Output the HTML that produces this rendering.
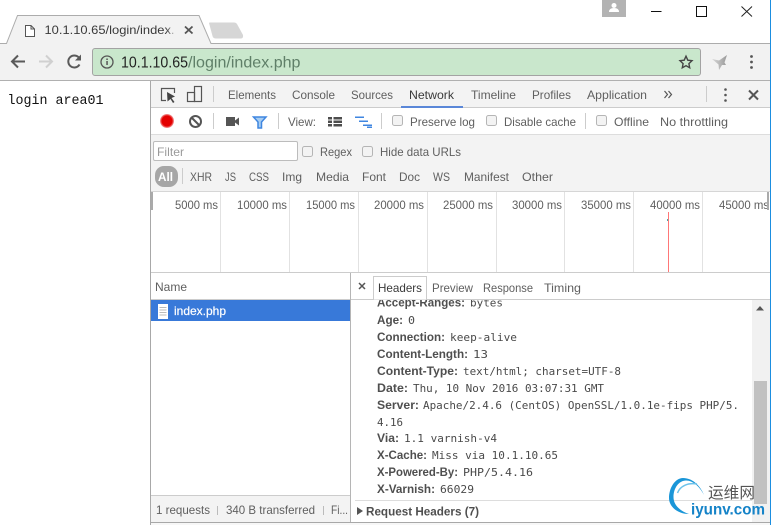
<!DOCTYPE html>
<html><head><meta charset="utf-8"><title>login</title>
<style>
html,body{margin:0;padding:0;background:#fff;width:771px;height:525px;overflow:hidden}
svg{display:block}
text{font-family:"Liberation Sans",sans-serif;font-size:12px;fill:#5f5f5f;white-space:pre}
.d{fill:#3a3a3a}
.b{font-weight:bold;fill:#4f4f4f}
.m{font-family:"DejaVu Sans Mono","Liberation Mono",monospace;font-size:11px;fill:#4a4a4a}
</style></head><body>
<svg width="771" height="525" viewBox="0 0 771 525" xmlns="http://www.w3.org/2000/svg">
<defs><clipPath id="hc"><rect x="352" y="300" width="400" height="195"/></clipPath>
<clipPath id="oc"><rect x="152" y="192" width="616" height="80"/></clipPath>
<linearGradient id="fade" x1="0" x2="1"><stop offset="0" stop-color="#f2f2f2" stop-opacity="0"/><stop offset="1" stop-color="#f2f2f2"/></linearGradient>
<linearGradient id="bird" x1="0" x2="1"><stop offset="0" stop-color="#d8d8d8"/><stop offset="1" stop-color="#9a9a9a"/></linearGradient>
<radialGradient id="rec"><stop offset="0.72" stop-color="#e40000"/><stop offset="1" stop-color="#f4a0a0"/></radialGradient></defs>

<!-- browser chrome -->
<rect width="771" height="525" fill="#fff"/>
<rect x="0" y="43" width="770" height="38" fill="#f2f2f2"/>
<path d="M6 43.500L17.500 15.500H199L211 43.500Z" fill="#f2f2f2"/>
<path d="M0 43.500H6.500L17.500 15.500H199L211 43.500H770" fill="none" stroke="#acacac"/>
<path d="M209 23Q209 22.500 210 22.500H234Q236 22.500 237 24L243 35Q243.500 38.500 241 38.500H216Q213 38.500 212.500 36Z" fill="#d6d6d6"/>
<path d="M25.500 25.500H31L34.500 29V36.500H25.500ZM31 25.500V29H34.500" fill="#fff" stroke="#555"/>
<text x="44.500" y="34" class="d" lengthAdjust="spacingAndGlyphs" textLength="130">10.1.10.65/login/index.</text>
<rect x="166" y="20" width="11" height="18" fill="url(#fade)"/>
<path d="M185 26.500L192.500 33.500M192.500 26.500L185 33.500" stroke="#555" stroke-width="1.800"/>
<rect x="602" y="0" width="24" height="17" fill="#b3b3b3"/>
<path d="M609 12Q609 8 614 8Q619 8 619 12Z" fill="#fff"/><circle cx="614" cy="5.500" r="2.500" fill="#fff"/>
<path d="M651 11.500H661.500" stroke="#111"/>
<rect x="696.500" y="6.500" width="10" height="10" fill="none" stroke="#111"/>
<path d="M741.500 6.500L752 16.500M752 6.500L741.500 16.500" stroke="#222"/>
<rect x="770" y="0" width="1" height="525" fill="#1b8ee0"/>

<path d="M25 61.500H12M18 55.500L12 61.500L18 67.500" fill="none" stroke="#5a5a5a" stroke-width="2"/>
<path d="M39 61.500H52M46 55.500L52 61.500L46 67.500" fill="none" stroke="#d0d0d0" stroke-width="2"/>
<path d="M79.500 64.500A6 6 0 1 1 79.500 58.500" fill="none" stroke="#5a5a5a" stroke-width="2"/><path d="M81 54.500V60.500H75Z" fill="#5a5a5a"/>
<rect x="92.500" y="48.500" width="608" height="27" rx="2.500" fill="#c9e7cc" stroke="#a3a3a3"/>
<circle cx="107" cy="62" r="6" fill="none" stroke="#555" stroke-width="1.300"/>
<rect x="106.300" y="61" width="1.500" height="4" fill="#555"/><rect x="106.300" y="58.500" width="1.500" height="1.500" fill="#555"/>
<text x="121" y="67.500" style="font-size:16px;fill:#222" lengthAdjust="spacingAndGlyphs" textLength="67">10.1.10.65</text>
<text x="188" y="67.500" style="font-size:16px;fill:#5f7f68" lengthAdjust="spacingAndGlyphs" textLength="112.500">/login/index.php</text>
<path d="M686 56.200L687.800 60.200L692 60.700L688.900 63.600L689.700 67.800L686 65.700L682.300 67.800L683.100 63.600L680 60.700L684.200 60.200Z" fill="none" stroke="#444" stroke-width="1.400"/>
<path d="M712 59L719 60.500L727 55L724.500 62.500L726 65L722 65L719 70L718.500 64.500Z" fill="url(#bird)"/>
<circle cx="751.500" cy="56.500" r="1.400" fill="#555"/><circle cx="751.500" cy="62" r="1.400" fill="#555"/><circle cx="751.500" cy="67.500" r="1.400" fill="#555"/>
<path d="M0 80.500H770" stroke="#b0b0b0"/>

<!-- page -->
<text x="7.500" y="104" style="font-family:'Liberation Mono',monospace;font-size:13.500px;fill:#111" lengthAdjust="spacingAndGlyphs" textLength="96">login area01</text>

<!-- devtools -->
<rect x="151" y="81" width="619" height="444" fill="#fff"/>
<path d="M150.500 81V525" stroke="#a8a8a8"/>
<rect x="151" y="81" width="619" height="26" fill="#f3f3f3"/>
<path d="M151 107.500H770" stroke="#ccc"/>
<rect x="401" y="106" width="62" height="2" fill="#5a87d8"/>
<path d="M166 100.500H161.500V88.500H174.500V93" fill="none" stroke="#555" stroke-width="1.200"/>
<path d="M167 92L175 96.500L171.500 98L174.500 102L173 103L170.500 99L167.500 101.500Z" fill="#444"/>
<rect x="194.500" y="86.500" width="7" height="15" fill="none" stroke="#555" stroke-width="1.200"/>
<rect x="187.500" y="92.500" width="7" height="9" fill="none" stroke="#555" stroke-width="1.200"/>
<path d="M213.500 86V102M706.500 86V102" stroke="#ccc"/>
<text x="228" y="99" lengthAdjust="spacingAndGlyphs" textLength="48">Elements</text>
<text x="292" y="99" lengthAdjust="spacingAndGlyphs" textLength="43">Console</text>
<text x="351" y="99" lengthAdjust="spacingAndGlyphs" textLength="42">Sources</text>
<text x="409" y="99" class="d" lengthAdjust="spacingAndGlyphs" textLength="45">Network</text>
<text x="471" y="99" lengthAdjust="spacingAndGlyphs" textLength="45">Timeline</text>
<text x="532" y="99" lengthAdjust="spacingAndGlyphs" textLength="39">Profiles</text>
<text x="587" y="99" lengthAdjust="spacingAndGlyphs" textLength="60">Application</text>
<path d="M664.500 91L667.500 94.500L664.500 98M668.500 91L671.500 94.500L668.500 98" fill="none" stroke="#555" stroke-width="1.200"/>
<circle cx="725.500" cy="89.500" r="1.300" fill="#555"/><circle cx="725.500" cy="95" r="1.300" fill="#555"/><circle cx="725.500" cy="100.500" r="1.300" fill="#555"/>
<path d="M749 90.500L758 99.500M758 90.500L749 99.500" stroke="#555" stroke-width="2"/>

<!-- toolbar 2 -->
<path d="M151 134.500H770" stroke="#ddd"/>
<circle cx="167" cy="121" r="7" fill="url(#rec)"/>
<circle cx="195.500" cy="121.500" r="5.500" fill="none" stroke="#555" stroke-width="2"/>
<path d="M191.500 117.500L199.500 125.500" stroke="#555" stroke-width="2"/>
<path d="M213.500 113V129M278.500 113V129M381.500 113V129M585.500 113V129" stroke="#ccc"/>
<rect x="226" y="117" width="9" height="9" fill="#555"/><path d="M235 120.500L239 117.500V125.500L235 122.500Z" fill="#555"/>
<path d="M253.500 117H266L261.500 122V128H258V122Z" fill="#a7cdf2" stroke="#3f86e0" stroke-width="1.500"/>
<text x="288" y="126" lengthAdjust="spacingAndGlyphs" textLength="28">View:</text>
<path d="M328 117h4v2.500h-4zM328 120.500h4v2.500h-4zM328 124h4v2.500h-4zM333.500 117h8.500v2.500h-8.500zM333.500 120.500h8.500v2.500h-8.500zM333.500 124h8.500v2.500h-8.500z" fill="#4d4d4d"/>
<path d="M355 116.500h9v1.500h-9zM359 120.500h9v1.500h-9zM363 124.500h9v1.500h-9zM367 126.500h5v1.500h-5z" fill="#3f86e0"/>
<g fill="#f3f3f3" stroke="#b5b5b5"><rect x="392.500" y="115.500" width="10" height="10" rx="2"/><rect x="486.500" y="115.500" width="10" height="10" rx="2"/><rect x="596.500" y="115.500" width="10" height="10" rx="2"/></g>
<text x="410" y="126" lengthAdjust="spacingAndGlyphs" textLength="65">Preserve log</text>
<text x="504" y="126" lengthAdjust="spacingAndGlyphs" textLength="72">Disable cache</text>
<text x="614" y="126" lengthAdjust="spacingAndGlyphs" textLength="35">Offline</text>
<text x="660" y="126" lengthAdjust="spacingAndGlyphs" textLength="68">No throttling</text>

<!-- filter bar -->
<rect x="151" y="135" width="619" height="57" fill="#f3f3f3"/>
<rect x="153.500" y="141.500" width="144" height="19" rx="1.500" fill="#fff" stroke="#bcbcbc"/>
<text x="157" y="156" style="fill:#9a9a9a" lengthAdjust="spacingAndGlyphs" textLength="27">Filter</text>
<g fill="#f3f3f3" stroke="#b5b5b5"><rect x="302.500" y="146.500" width="10" height="10" rx="2"/><rect x="362.500" y="146.500" width="10" height="10" rx="2"/></g>
<text x="320" y="156" lengthAdjust="spacingAndGlyphs" textLength="32">Regex</text>
<text x="380" y="156" lengthAdjust="spacingAndGlyphs" textLength="81">Hide data URLs</text>
<rect x="155" y="166" width="23" height="21" rx="9" fill="#a6a6a6"/>
<text x="158" y="181" style="fill:#fff;font-weight:bold" lengthAdjust="spacingAndGlyphs" textLength="15">All</text>
<path d="M182.500 168V184" stroke="#ccc"/>
<text x="190" y="181" lengthAdjust="spacingAndGlyphs" textLength="22">XHR</text>
<text x="225" y="181" lengthAdjust="spacingAndGlyphs" textLength="11">JS</text>
<text x="249" y="181" lengthAdjust="spacingAndGlyphs" textLength="20">CSS</text>
<text x="282" y="181" lengthAdjust="spacingAndGlyphs" textLength="20">Img</text>
<text x="316" y="181" lengthAdjust="spacingAndGlyphs" textLength="33">Media</text>
<text x="362" y="181" lengthAdjust="spacingAndGlyphs" textLength="24">Font</text>
<text x="399" y="181" lengthAdjust="spacingAndGlyphs" textLength="21">Doc</text>
<text x="433" y="181" lengthAdjust="spacingAndGlyphs" textLength="17">WS</text>
<text x="464" y="181" lengthAdjust="spacingAndGlyphs" textLength="45">Manifest</text>
<text x="522" y="181" lengthAdjust="spacingAndGlyphs" textLength="31">Other</text>

<!-- overview -->
<path d="M151 191.500H770" stroke="#d6d6d6"/>
<rect x="151" y="192" width="619" height="80" fill="#fff"/>
<path d="M220.500 192V272M289.500 192V272M358.500 192V272M427.500 192V272M496.500 192V272M564.500 192V272M633.500 192V272M702.500 192V272" stroke="#e2e2e2"/>
<g clip-path="url(#oc)">
<text x="175" y="209" lengthAdjust="spacingAndGlyphs" textLength="43">5000 ms</text>
<text x="237" y="209" lengthAdjust="spacingAndGlyphs" textLength="50">10000 ms</text>
<text x="306" y="209" lengthAdjust="spacingAndGlyphs" textLength="49">15000 ms</text>
<text x="374" y="209" lengthAdjust="spacingAndGlyphs" textLength="50">20000 ms</text>
<text x="443" y="209" lengthAdjust="spacingAndGlyphs" textLength="50">25000 ms</text>
<text x="512" y="209" lengthAdjust="spacingAndGlyphs" textLength="50">30000 ms</text>
<text x="581" y="209" lengthAdjust="spacingAndGlyphs" textLength="50">35000 ms</text>
<text x="650" y="209" lengthAdjust="spacingAndGlyphs" textLength="50">40000 ms</text>
<text x="719" y="209" lengthAdjust="spacingAndGlyphs" textLength="50">45000 ms</text>
</g>
<rect x="151" y="192" width="2" height="18" fill="#aaa"/>
<rect x="767" y="192" width="2" height="18" fill="#aaa"/>
<rect x="668" y="212" width="1" height="60" fill="#f77"/>
<rect x="667" y="219" width="1" height="2" fill="#4aa"/>
<path d="M151 272.500H770" stroke="#ccc"/>

<!-- name col -->
<path d="M151 299.500H350" stroke="#ccc"/>
<path d="M350.500 273V522" stroke="#b5b5b5"/>
<text x="155" y="291" lengthAdjust="spacingAndGlyphs" textLength="32">Name</text>
<rect x="151" y="300" width="199" height="21" fill="#3879d9"/>
<rect x="158" y="304" width="10" height="15" fill="#fff"/>
<path d="M159.500 307.500h7M159.500 310h7M159.500 312.500h7M159.500 315h7" stroke="#bbb"/>
<text x="174" y="315" style="fill:#fff" stroke="#fff" stroke-width="0.200" lengthAdjust="spacingAndGlyphs" textLength="52">index.php</text>

<!-- status bar -->
<rect x="151" y="495" width="199" height="27" fill="#f3f3f3"/>
<path d="M151 495.500H350" stroke="#ccc"/>
<text x="156" y="514" lengthAdjust="spacingAndGlyphs" textLength="54">1 requests</text>
<rect x="217" y="506" width="1" height="9" fill="#bbb"/>
<text x="226" y="514" lengthAdjust="spacingAndGlyphs" textLength="89">340 B transferred</text>
<rect x="323" y="506" width="1" height="9" fill="#bbb"/>
<text x="331" y="514" lengthAdjust="spacingAndGlyphs" textLength="17">Fi...</text>
<rect x="151" y="522" width="619" height="3" fill="#f7f7f7"/>
<path d="M151 522.500H770" stroke="#a8a8a8"/>

<!-- details tabs -->
<path d="M351 299.500H770" stroke="#ccc"/>
<path d="M359 283L365 289M365 283L359 289" stroke="#555" stroke-width="1.500"/>
<path d="M373.500 299.500V276.500H426.500V299.500" fill="#fff" stroke="#ccc"/>
<text x="378" y="292" class="d" lengthAdjust="spacingAndGlyphs" textLength="44">Headers</text>
<text x="432" y="292" lengthAdjust="spacingAndGlyphs" textLength="41">Preview</text>
<text x="483" y="292" lengthAdjust="spacingAndGlyphs" textLength="50">Response</text>
<text x="544" y="292" lengthAdjust="spacingAndGlyphs" textLength="37">Timing</text>

<!-- headers -->
<g clip-path="url(#hc)">
<text x="377" y="306.500" class="b" lengthAdjust="spacingAndGlyphs" textLength="88">Accept-Ranges:</text><text x="470" y="306.500" class="m" lengthAdjust="spacingAndGlyphs" textLength="33">bytes</text>
<text x="377" y="324" class="b" lengthAdjust="spacingAndGlyphs" textLength="26">Age:</text><text x="408" y="324" class="m" lengthAdjust="spacingAndGlyphs" textLength="7">0</text>
<text x="377" y="341" class="b" lengthAdjust="spacingAndGlyphs" textLength="68">Connection:</text><text x="450" y="341" class="m" lengthAdjust="spacingAndGlyphs" textLength="67">keep-alive</text>
<text x="377" y="358" class="b" lengthAdjust="spacingAndGlyphs" textLength="91">Content-Length:</text><text x="473" y="358" class="m" lengthAdjust="spacingAndGlyphs" textLength="15">13</text>
<text x="377" y="375" class="b" lengthAdjust="spacingAndGlyphs" textLength="81">Content-Type:</text><text x="463" y="375" class="m" lengthAdjust="spacingAndGlyphs" textLength="158">text/html; charset=UTF-8</text>
<text x="377" y="392" class="b" lengthAdjust="spacingAndGlyphs" textLength="31">Date:</text><text x="413" y="392" class="m" lengthAdjust="spacingAndGlyphs" textLength="191">Thu, 10 Nov 2016 03:07:31 GMT</text>
<text x="377" y="409" class="b" lengthAdjust="spacingAndGlyphs" textLength="42">Server:</text><text x="423" y="409" class="m" lengthAdjust="spacingAndGlyphs" textLength="316">Apache/2.4.6 (CentOS) OpenSSL/1.0.1e-fips PHP/5.</text>
<text x="377" y="426" class="m" lengthAdjust="spacingAndGlyphs" textLength="26">4.16</text>
<text x="377" y="442" class="b" lengthAdjust="spacingAndGlyphs" textLength="22">Via:</text><text x="404" y="442" class="m" lengthAdjust="spacingAndGlyphs" textLength="93">1.1 varnish-v4</text>
<text x="377" y="459" class="b" lengthAdjust="spacingAndGlyphs" textLength="50">X-Cache:</text><text x="432" y="459" class="m" lengthAdjust="spacingAndGlyphs" textLength="126">Miss via 10.1.10.65</text>
<text x="377" y="476" class="b" lengthAdjust="spacingAndGlyphs" textLength="81">X-Powered-By:</text><text x="463" y="476" class="m" lengthAdjust="spacingAndGlyphs" textLength="70">PHP/5.4.16</text>
<text x="377" y="493" class="b" lengthAdjust="spacingAndGlyphs" textLength="58">X-Varnish:</text><text x="440" y="493" class="m" lengthAdjust="spacingAndGlyphs" textLength="34">66029</text>
</g>
<path d="M355 500.500H753" stroke="#ddd"/>
<path d="M357 507L363 511L357 515Z" fill="#555"/>
<text x="366" y="515.500" class="b" lengthAdjust="spacingAndGlyphs" textLength="113">Request Headers (7)</text>

<!-- scrollbar -->
<rect x="752" y="300" width="18" height="222" fill="#f1f1f1"/>
<path d="M760 306L764 310.500H756Z" fill="#555"/>
<rect x="754" y="381" width="13" height="123" fill="#c1c1c1"/>

<!-- watermark -->
<path d="M704 495C700 485 692 478 683 478C675 478 669 488 669 498C669 507 678 514 689 514C680 511 673.500 505 673.500 497C673.500 488 679 480.500 686 480.500C693 480.500 700 487 704 495Z" fill="#1a96d8"/>
<path d="M677.500 493C680 486 688 482.500 697 484" fill="none" stroke="#6cc2ea" stroke-width="1.500"/>
<text x="708" y="498" style="font-family:'Liberation Sans','Noto Sans CJK SC',sans-serif;font-size:15.500px;fill:#555" lengthAdjust="spacingAndGlyphs" textLength="47">运维网</text>
<text x="691" y="514.500" style="font-size:16px;font-weight:bold;fill:#1583c8" lengthAdjust="spacingAndGlyphs" textLength="74">iyunv.com</text>
</svg>
</body></html>
